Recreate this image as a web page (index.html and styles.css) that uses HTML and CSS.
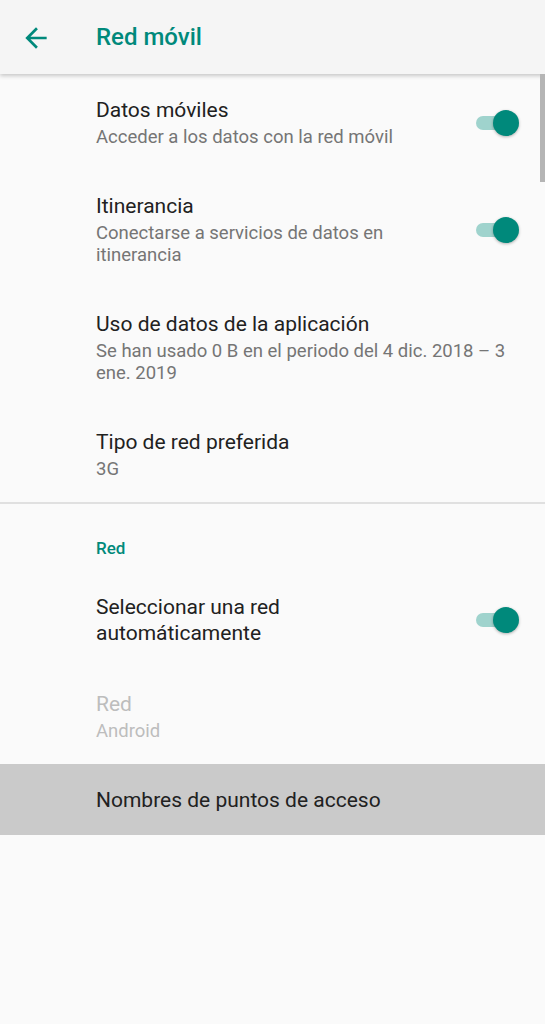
FILE: index.html
```html
<!DOCTYPE html>
<html lang="es">

<head>
    <meta charset="UTF-8">
    <meta name="viewport" content="width=device-width, initial-scale=1.0">
    <title>Red móvil</title>
    <link rel="stylesheet" href="styles.css">
</head>

<body>
    <header class="appbar">
        <svg class="back" viewBox="0 0 24 24" width="32" height="32">
            <path d="M20 11H7.83l5.59-5.59L12 4l-8 8 8 8 1.41-1.41L7.83 13H20v-2z"></path>
        </svg>
        <h1 class="appbar-title">Red móvil</h1>
    </header>
    <div class="scrollbar"></div>

    <main>
        <div class="pref has-switch">
            <div class="pref-text">
                <div class="pref-title">Datos móviles</div>
                <div class="pref-summary">Acceder a los datos con la red móvil</div>
            </div>
            <div class="switch"><span class="thumb"></span></div>
        </div>

        <div class="pref has-switch">
            <div class="pref-text">
                <div class="pref-title">Itinerancia</div>
                <div class="pref-summary">Conectarse a servicios de datos en itinerancia</div>
            </div>
            <div class="switch"><span class="thumb"></span></div>
        </div>

        <div class="pref">
            <div class="pref-text">
                <div class="pref-title">Uso de datos de la aplicación</div>
                <div class="pref-summary">Se han usado 0 B en el periodo del 4 dic. 2018 – 3 ene. 2019</div>
            </div>
        </div>

        <div class="pref">
            <div class="pref-text">
                <div class="pref-title">Tipo de red preferida</div>
                <div class="pref-summary">3G</div>
            </div>
        </div>

        <div class="divider"></div>

        <div class="category">Red</div>

        <div class="pref has-switch">
            <div class="pref-text">
                <div class="pref-title">Seleccionar una red automáticamente</div>
            </div>
            <div class="switch"><span class="thumb"></span></div>
        </div>

        <div class="pref disabled">
            <div class="pref-text">
                <div class="pref-title">Red</div>
                <div class="pref-summary">Android</div>
            </div>
        </div>

        <div class="pref pressed">
            <div class="pref-text">
                <div class="pref-title">Nombres de puntos de acceso</div>
            </div>
        </div>
    </main>
</body>

</html>
```

FILE: styles.css
```css
body {
    margin: 0;
    background-color: #fafafa;
    font-family: Roboto, "Noto Sans", sans-serif;
    color: #212121;
}

.appbar {
    height: 74px;
    display: flex;
    align-items: center;
    background-color: #f5f5f5;
    box-shadow: 0 2px 4px rgba(0, 0, 0, 0.2);
    position: relative;
    z-index: 2;
}

.back {
    fill: #00897b;
    margin-left: 20px;
    margin-top: 1px;
}

.appbar-title {
    margin: 0 0 0 44px;
    font-size: 24px;
    font-weight: 500;
    color: #00897b;
}

.scrollbar {
    position: absolute;
    top: 74px;
    right: 0;
    width: 5px;
    height: 108px;
    background-color: #b5b5b5;
    z-index: 3;
}

.pref {
    display: flex;
    align-items: center;
    padding: 23px 26px 22px 96px;
}

.pref-text {
    flex: 1;
}

.has-switch {
    justify-content: space-between;
}

.has-switch .pref-text {
    max-width: 320px;
}

.pref-title {
    font-size: 21px;
    line-height: 26px;
}

.pref-summary {
    margin-top: 3px;
    font-size: 18.5px;
    line-height: 22px;
    color: #757575;
}

.disabled .pref-title,
.disabled .pref-summary {
    color: #bdbdbd;
}

.pressed {
    background-color: #cacaca;
}

.switch {
    position: relative;
    width: 36px;
    height: 14px;
    margin-right: 7px;
    border-radius: 7px;
    background-color: #9fd3cd;
}

.thumb {
    position: absolute;
    top: -6px;
    right: -7px;
    width: 26px;
    height: 26px;
    border-radius: 50%;
    background-color: #00897b;
    box-shadow: 0 1px 3px rgba(0, 0, 0, 0.3);
}

.divider {
    height: 2px;
    background-color: #e0e0e0;
}

.category {
    padding: 34px 0 13px 96px;
    font-size: 17px;
    line-height: 20px;
    font-weight: 500;
    color: #00897b;
}
```
